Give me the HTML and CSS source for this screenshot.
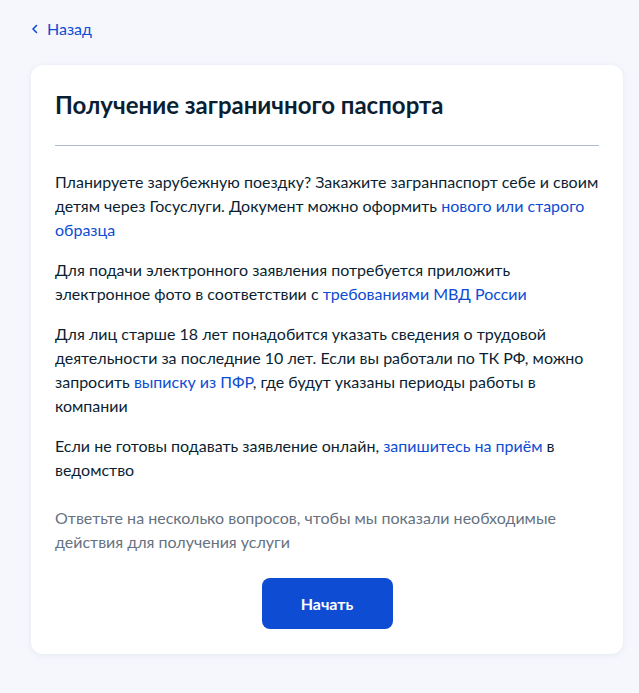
FILE: index.html
```html
<!DOCTYPE html>
<html lang="ru">
<head>
<meta charset="utf-8">
<link rel="stylesheet" href="styles.css">
</head>
<body>
<div class="page">
  <a class="back" href="#">
    <svg class="back-icon" width="8" height="10" viewBox="0 0 8 10"><path d="M5.5 1.5 L2 5 L5.5 8.5" fill="none" stroke="#0d4cd3" stroke-width="1.6" stroke-linecap="round" stroke-linejoin="round"/></svg>
    <span>Назад</span>
  </a>
  <main class="card">
    <h1 class="title">Получение заграничного паспорта</h1>
    <hr class="divider">
    <p class="text">Планируете зарубежную поездку? Закажите загранпаспорт себе и своим детям через Госуслуги. Документ можно оформить <a href="#">нового или старого образца</a></p>
    <p class="text">Для подачи электронного заявления потребуется приложить электронное фото в соответствии с <a href="#">требованиями МВД России</a></p>
    <p class="text">Для лиц старше 18 лет понадобится указать сведения о трудовой деятельности за последние 10 лет. Если вы работали по ТК РФ, можно запросить <a href="#">выписку из ПФР</a>, где будут указаны периоды работы в компании</p>
    <p class="text">Если не готовы подавать заявление онлайн, <a href="#">запишитесь на приём</a> в ведомство</p>
    <p class="text muted">Ответьте на несколько вопросов, чтобы мы показали необходимые действия для получения услуги</p>
    <div class="actions">
      <button class="btn">Начать</button>
    </div>
  </main>
</div>
</body>
</html>
```
FILE: styles.css
```css
html, body {
  margin: 0;
  padding: 0;
  background: #f5f7fc;
}
body {
  font-family: Lato, "Noto Sans", sans-serif;
  color: #0b1f33;
}
.page {
  padding: 17px 16px 39px 31px;
}
.back {
  display: inline-flex;
  align-items: center;
  gap: 8px;
  color: #0d4cd3;
  text-decoration: none;
  font-size: 16px;
  line-height: 24px;
}
.back-icon {
  display: block;
}
.card {
  margin-top: 24px;
  background: #ffffff;
  border-radius: 12px;
  box-shadow: 0 1px 6px rgba(40, 70, 140, 0.08);
  padding: 24px 24px 25px;
}
.title {
  margin: 0;
  font-size: 24px;
  line-height: 32px;
  font-weight: 700;
  color: #0b1f33;
}
.divider {
  margin: 24px 0 24px;
  border: 0;
  height: 1px;
  background: #b0bad0;
}
.text {
  margin: 0 0 16px;
  font-size: 16px;
  line-height: 24px;
}
.text a {
  color: #0d4cd3;
  text-decoration: none;
}
.muted {
  color: #66727f;
  margin-top: 24px;
  margin-bottom: 24px;
}
.actions {
  display: flex;
  justify-content: center;
}
.btn {
  width: 131px;
  height: 51px;
  border: 0;
  border-radius: 8px;
  background: #0d4cd3;
  color: #ffffff;
  font-family: Lato, "Noto Sans", sans-serif;
  font-size: 16px;
  font-weight: 700;
  cursor: pointer;
}
```
